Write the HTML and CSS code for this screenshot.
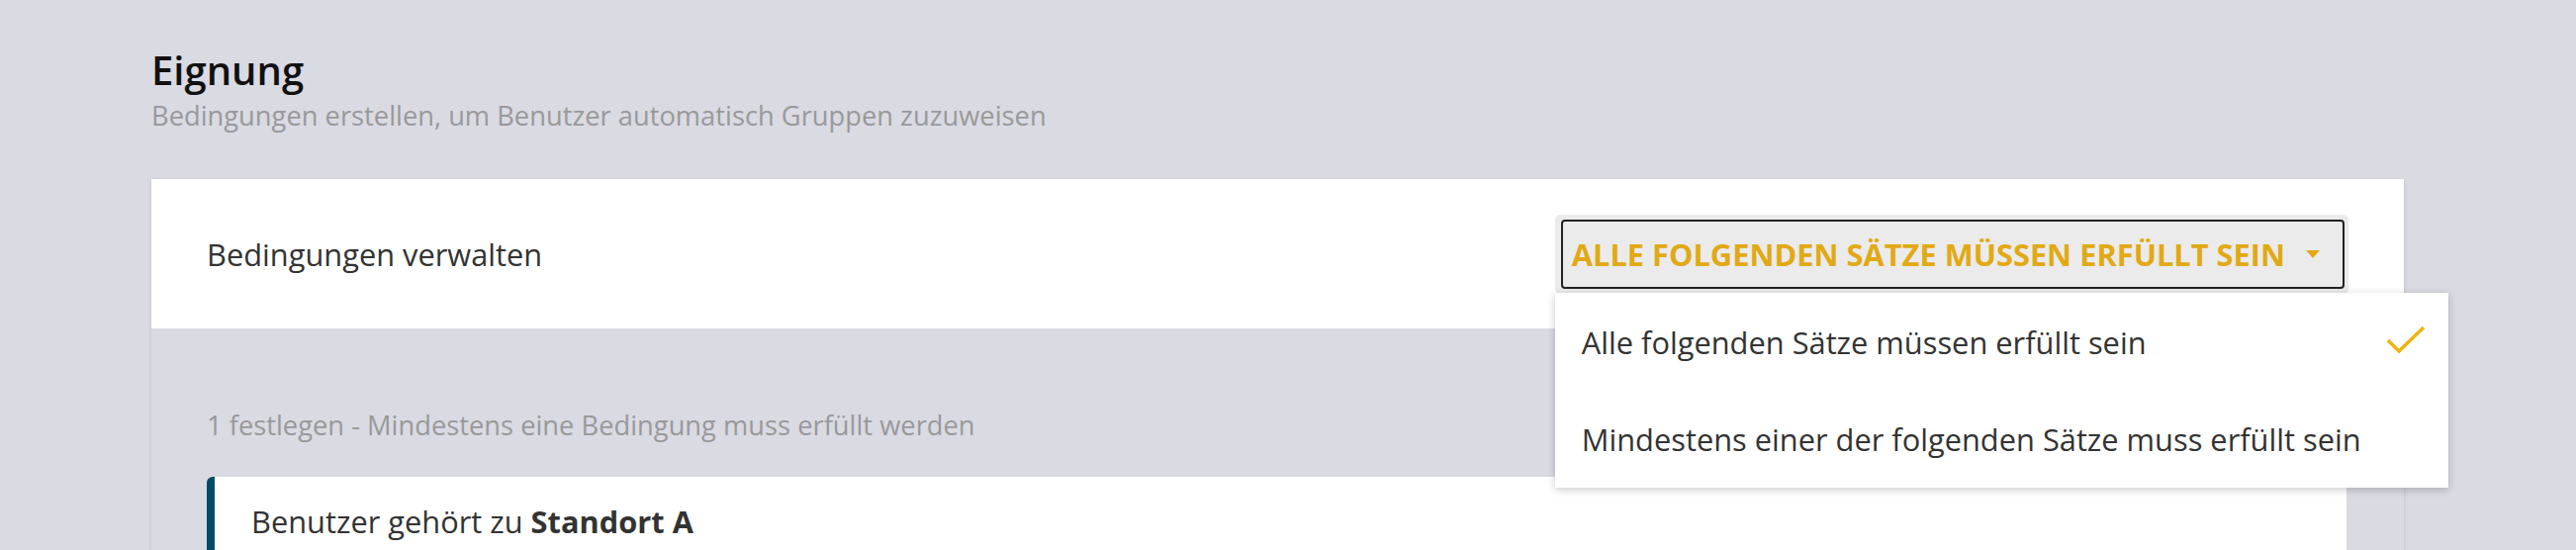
FILE: index.html
```html
<html>
  <head>
    <link rel="stylesheet" href="styles.css">
    <title>Eignung</title>
  </head>
  <body>
    <div class="page">
      <h1 class="pageTitle">Eignung</h1>
      <div class="pageSubtitle">Bedingungen erstellen, um Benutzer automatisch Gruppen zuzuweisen</div>

      <div class="card">
        <div class="cardHeader">
          <div class="cardLabel">Bedingungen verwalten</div>
          <div class="selectWrap">
            <div class="selectButton">
              <div class="selectInner">
                <span class="selectText">Alle folgenden Sätze müssen erfüllt sein</span>
                <span class="selectArrow"></span>
              </div>
            </div>
            <div class="selectMenu">
              <div class="selectOption">
                Alle folgenden Sätze müssen erfüllt sein
                <svg class="checkIcon" width="40" height="30" viewBox="0 0 40 30">
                  <polyline points="1,15 12,26 37,2" fill="none" stroke="#efb412" stroke-width="3.5"/>
                </svg>
              </div>
              <div class="selectOption">Mindestens einer der folgenden Sätze muss erfüllt sein</div>
            </div>
          </div>
        </div>
        <div class="cardBody">
          <div class="setLabel">1 festlegen - Mindestens eine Bedingung muss erfüllt werden</div>
          <div class="condition">Benutzer gehört zu <b>Standort A</b></div>
        </div>
      </div>
    </div>
  </body>
</html>
```
FILE: styles.css
```css
* {
  margin: 0;
  padding: 0;
  box-sizing: border-box;
}
body {
  background-color: rgb(218, 218, 227);
  font-family: "Open Sans", "Noto Sans", sans-serif;
  overflow: hidden;
}
.page {
  padding: 47px 174px 0 153px;
}
.pageTitle {
  font-size: 40px;
  line-height: 48px;
  font-weight: 600;
  color: #111;
}
.pageSubtitle {
  margin-top: 5px;
  font-size: 27.3px;
  line-height: 34px;
  color: #999;
}
.card {
  margin-top: 47px;
  box-shadow: 0 1px 4px rgba(0, 0, 0, 0.14);
}
.cardHeader {
  height: 151px;
  background-color: white;
  padding: 0 56px;
  display: flex;
  justify-content: space-between;
  align-items: center;
}
.cardLabel {
  font-size: 30.8px;
  color: #333;
}
.selectWrap {
  position: relative;
}
.selectButton {
  background-color: rgb(235, 235, 235);
  border-radius: 5px;
  padding: 5px 4px 5px 6px;
}
.selectInner {
  height: 70px;
  border: 2px solid #222;
  border-radius: 4px;
  display: flex;
  align-items: center;
  gap: 21px;
  padding: 0 23px 0 9px;
}
.selectText {
  font-size: 30.8px;
  font-weight: 700;
  text-transform: uppercase;
  color: rgb(225, 169, 20);
}
.selectArrow {
  width: 0;
  height: 0;
  border-left: 7px solid transparent;
  border-right: 7px solid transparent;
  border-top: 8px solid rgb(225, 169, 20);
}
.selectMenu {
  position: absolute;
  top: 79px;
  left: 0;
  width: 903px;
  padding-top: 1px;
  background-color: white;
  box-shadow: 0 2px 8px rgba(0, 0, 0, 0.22);
  z-index: 1;
}
.selectOption {
  height: 98px;
  padding: 0 22px 0 27px;
  display: flex;
  align-items: center;
  justify-content: space-between;
  font-size: 30.8px;
  color: #333;
}
.checkIcon {
  margin-top: -4px;
}
.cardBody {
  padding: 80px 58px 0 56px;
}
.setLabel {
  font-size: 27.3px;
  line-height: 36px;
  color: #999;
}
.condition {
  margin-top: 34px;
  background-color: white;
  border-left: 8px solid rgb(0, 74, 102);
  border-top-left-radius: 6px;
  padding: 25px 0 40px 37px;
  font-size: 30.8px;
  line-height: 40px;
  color: #333;
}
.condition b {
  font-weight: 700;
}
```
